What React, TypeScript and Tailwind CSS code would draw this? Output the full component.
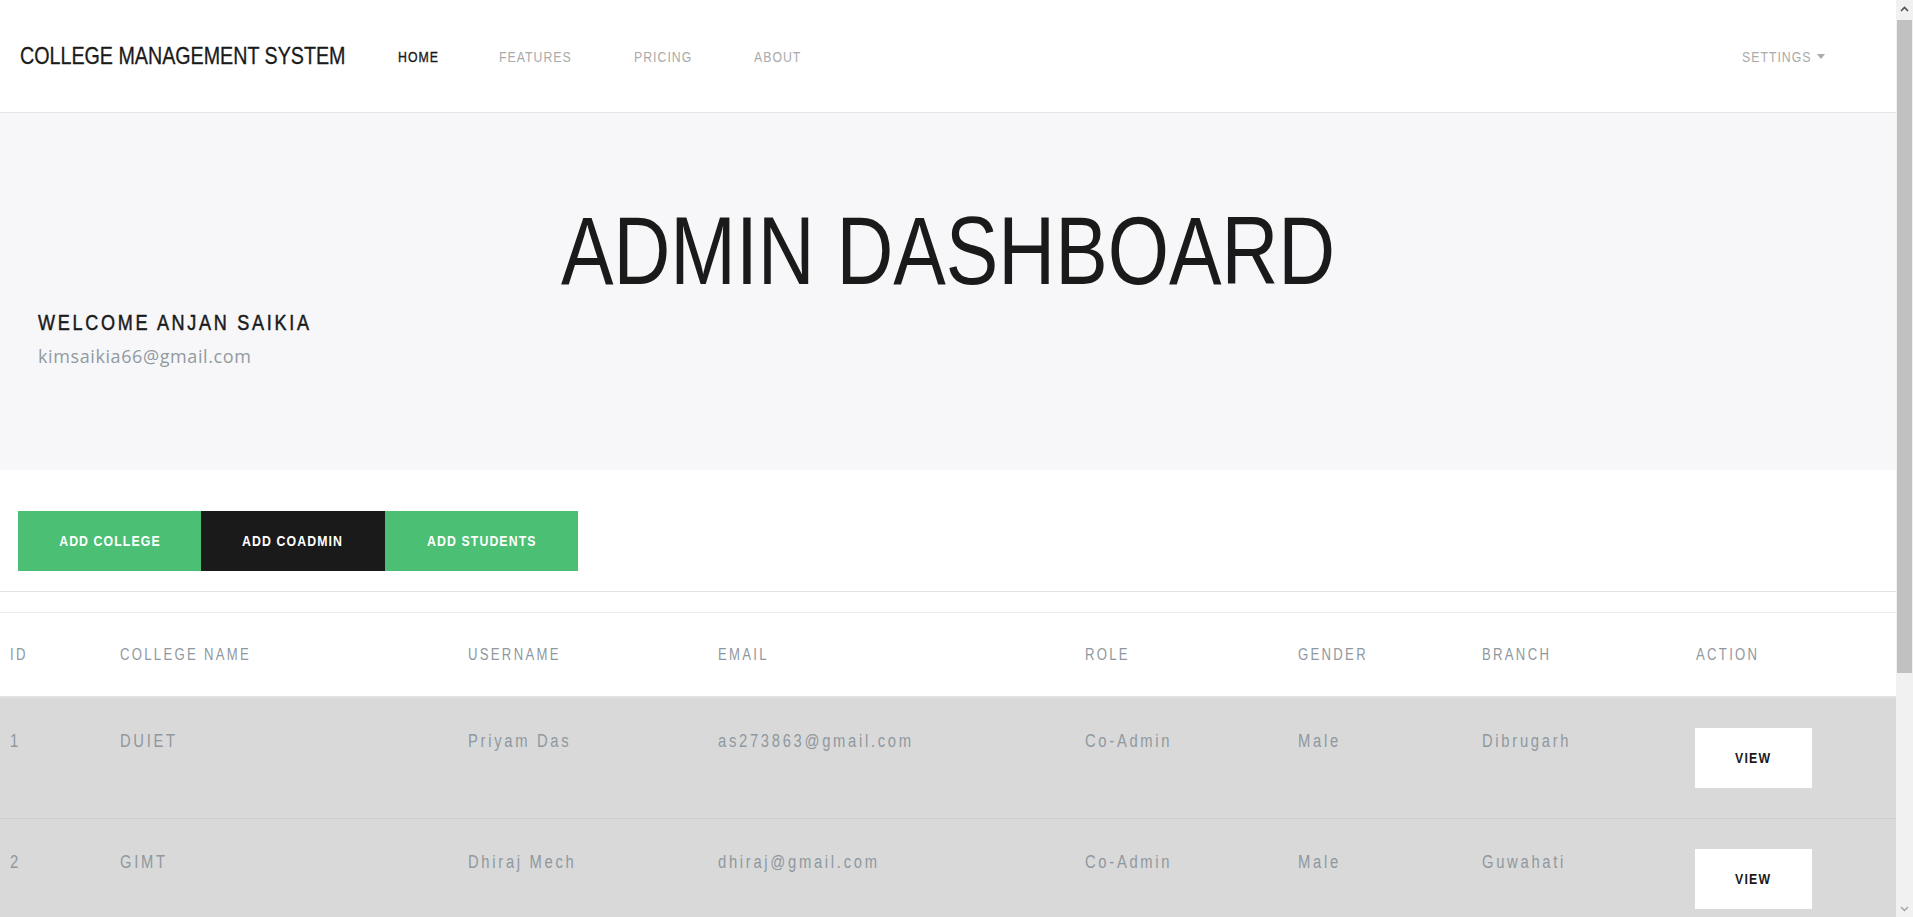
import React from "react";

const SANS = "font-['Liberation_Sans','Arial',sans-serif]";

function N({ children, className = "", center = false }: { children: React.ReactNode; className?: string; center?: boolean }) {
  return (
    <span className={`inline-block whitespace-nowrap scale-x-[0.82] ${center ? "origin-center" : "origin-left"} ${className}`}>
      {children}
    </span>
  );
}

const rows = [
  { id: "1", college: "DUIET", user: "Priyam Das", email: "as273863@gmail.com", role: "Co-Admin", gender: "Male", branch: "Dibrugarh" },
  { id: "2", college: "GIMT", user: "Dhiraj Mech", email: "dhiraj@gmail.com", role: "Co-Admin", gender: "Male", branch: "Guwahati" },
];

const headers = ["ID", "COLLEGE NAME", "USERNAME", "EMAIL", "ROLE", "GENDER", "BRANCH", "ACTION"];

const navLinks = [
  { label: "HOME", w: "w-[41px]", active: true },
  { label: "FEATURES", w: "w-[75px]", active: false },
  { label: "PRICING", w: "w-[60px]", active: false },
  { label: "ABOUT", w: "w-[49px]", active: false },
];

function ScrollBar() {
  return (
    <div className="flex h-screen w-[17px] shrink-0 flex-col bg-[#f1f1f1]">
      <div className="flex h-[17px] items-center justify-center">
        <svg width="9" height="6" viewBox="0 0 9 6">
          <path d="M1 5 L4.5 1.5 L8 5" fill="none" stroke="#505050" strokeWidth="1.6" />
        </svg>
      </div>
      <div className="mx-[1px] mt-[3px] h-[653px] bg-[#c1c1c1]" />
      <div className="flex-1" />
      <div className="flex h-[17px] items-center justify-center">
        <svg width="9" height="6" viewBox="0 0 9 6">
          <path d="M1 1 L4.5 4.5 L8 1" fill="none" stroke="#a3a3a3" strokeWidth="1.4" />
        </svg>
      </div>
    </div>
  );
}

export default function App() {
  return (
    <div className={`flex h-screen overflow-hidden bg-white ${SANS}`}>
      <main className="min-w-0 flex-1">
        <nav className="flex h-[113px] items-center border-b border-[#e6e6e6] pl-5 pr-[71px]">
          <div className="w-[326px] text-[24px] leading-none text-[#1a1a1a]">
            <N className="[-webkit-text-stroke:0.3px_#1a1a1a]">COLLEGE MANAGEMENT SYSTEM</N>
          </div>
          <ul className="ml-[22px] flex items-center">
            {navLinks.map((l) => (
              <li key={l.label} className="px-[30px]">
                <div className={`${l.w} text-[15px] leading-none tracking-[1.22px] ${l.active ? "text-[#1a1a1a] [-webkit-text-stroke:0.35px_#1a1a1a]" : "text-[#aaaaaa]"}`}>
                  <N>{l.label}</N>
                </div>
              </li>
            ))}
          </ul>
          <div className="ml-auto flex items-center text-[15px] leading-none tracking-[1.22px] text-[#aaaaaa]">
            <div className="w-[70px]">
              <N>SETTINGS</N>
            </div>
            <span className="ml-[5px] inline-block h-0 w-0 border-x-[4px] border-t-[5px] border-x-transparent border-t-[#aaaaaa]" />
          </div>
        </nav>

        <section className="h-[357px] bg-[#f7f7f9] px-[38px] pt-[80px]">
          <h1 className="text-center text-[96px] leading-[1.2] text-[#1a1a1a]">
            <N center>ADMIN DASHBOARD</N>
          </h1>
          <h5 className="mt-[2px] text-[22px] leading-[1.2] tracking-[3.3px] text-[#1a1a1a] [-webkit-text-stroke:0.5px_#1a1a1a]">
            <N>WELCOME ANJAN SAIKIA</N>
          </h5>
          <p className="mt-[6px] font-['Open_Sans',sans-serif] text-[18px] leading-[1.5] tracking-[0.6px] text-[#919aa1]">kimsaikia66@gmail.com</p>
        </section>

        <div className="flex pl-[18px] pt-[41px]">
          <button className="flex h-[60px] w-[183px] items-center justify-center bg-[#4bbf73] text-[15px] font-bold tracking-[1.34px] text-white">
            <N center>ADD COLLEGE</N>
          </button>
          <button className="flex h-[60px] w-[184px] items-center justify-center bg-[#1a1a1a] text-[15px] font-bold tracking-[1.34px] text-white">
            <N center>ADD COADMIN</N>
          </button>
          <button className="flex h-[60px] w-[193px] items-center justify-center bg-[#4bbf73] text-[15px] font-bold tracking-[1.34px] text-white">
            <N center>ADD STUDENTS</N>
          </button>
        </div>

        <div className="mt-[20px] border-t border-[#e3e3e3]" />

        <table className="mt-[20px] w-full table-fixed border-collapse">
          <colgroup>
            <col className="w-[110px]" />
            <col className="w-[348px]" />
            <col className="w-[250px]" />
            <col className="w-[367px]" />
            <col className="w-[213px]" />
            <col className="w-[184px]" />
            <col className="w-[214px]" />
            <col />
          </colgroup>
          <thead>
            <tr className="border-t border-b-2 border-t-[#ececec] border-b-[#e2e2e2]">
              {headers.map((h) => (
                <th key={h} className="py-[28px] pl-[10px] text-left text-[16px] font-normal leading-[27px] tracking-[2.8px] text-[#8f989f]">
                  <N>{h}</N>
                </th>
              ))}
            </tr>
          </thead>
          <tbody>
            {rows.map((r) => (
              <tr key={r.id} className="border-b border-[#cfcfcf] bg-[#d9d9d9]">
                {[r.id, r.college, r.user, r.email, r.role, r.gender, r.branch].map((v, i) => (
                  <td key={i} className="py-[30px] pl-[10px] align-top text-[18px] leading-[27px] tracking-[3.3px] text-[#8f989f]">
                    <N>{v}</N>
                  </td>
                ))}
                <td className="py-[30px] pl-[9px] align-top">
                  <button className="flex h-[60px] w-[117px] items-center justify-center bg-white text-[15px] font-bold tracking-[1.5px] text-[#1a1a1a]">
                    <N center>VIEW</N>
                  </button>
                </td>
              </tr>
            ))}
          </tbody>
        </table>
      </main>
      <ScrollBar />
    </div>
  );
}
